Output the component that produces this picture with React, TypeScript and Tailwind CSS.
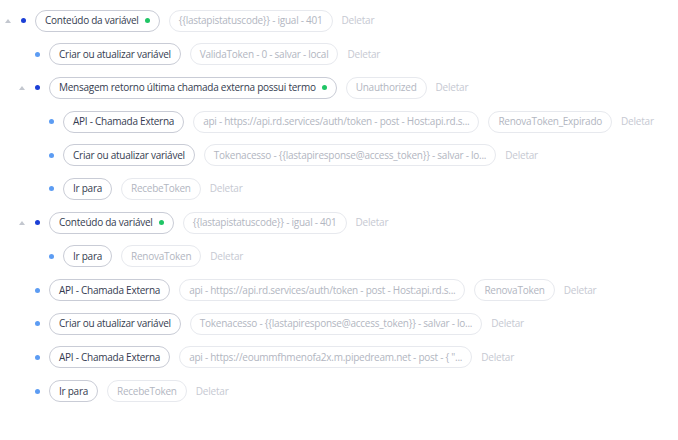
type Row = {
  level: 0 | 1 | 2;
  caret?: boolean;
  dark?: boolean;
  title: string;
  green?: boolean;
  values: string[];
};

const rows: Row[] = [
  { level: 0, caret: true, dark: true, title: "Conteúdo da variável", green: true, values: ["{{lastapistatuscode}} - igual - 401"] },
  { level: 1, title: "Criar ou atualizar variável", values: ["ValidaToken - 0 - salvar - local"] },
  { level: 1, caret: true, dark: true, title: "Mensagem retorno última chamada externa possui termo", green: true, values: ["Unauthorized"] },
  { level: 2, title: "API - Chamada Externa", values: ["api - https://api.rd.services/auth/token - post - Host:api.rd.s...", "RenovaToken_Expirado"] },
  { level: 2, title: "Criar ou atualizar variável", values: ["Tokenacesso - {{lastapiresponse@access_token}} - salvar - lo..."] },
  { level: 2, title: "Ir para", values: ["RecebeToken"] },
  { level: 1, caret: true, dark: true, title: "Conteúdo da variável", green: true, values: ["{{lastapistatuscode}} - igual - 401"] },
  { level: 2, title: "Ir para", values: ["RenovaToken"] },
  { level: 1, title: "API - Chamada Externa", values: ["api - https://api.rd.services/auth/token - post - Host:api.rd.s...", "RenovaToken"] },
  { level: 1, title: "Criar ou atualizar variável", values: ["Tokenacesso - {{lastapiresponse@access_token}} - salvar - lo..."] },
  { level: 1, title: "API - Chamada Externa", values: ["api - https://eoummfhmenofa2x.m.pipedream.net - post - { \"..."] },
  { level: 1, title: "Ir para", values: ["RecebeToken"] },
];

const indent = ["pl-[1px]", "pl-[15px]", "pl-[29px]"];

function TreeRow({ row }: { row: Row }) {
  return (
    <div className={`flex h-[22px] items-center whitespace-nowrap ${indent[row.level]}`}>
      {/* caret */}
      <div className="flex w-[14px] shrink-0 items-center justify-center">
        {row.caret && (
          <svg width="6" height="4" viewBox="0 0 6 4">
            <path d="M3 0 L6 4 L0 4 Z" fill="#c3c7cf" />
          </svg>
        )}
      </div>
      {/* status dot */}
      <div className="flex w-[16px] shrink-0 items-center justify-center">
        <span className={`h-[5px] w-[5px] rounded-full ${row.dark ? "bg-[#1b3fd6]" : "bg-[#5c9cf3]"}`} />
      </div>
      <div className="ml-[4px] flex h-[22px] shrink-0 items-center gap-[6px] rounded-full border border-[#c9ccd6] px-[9px] text-[10px] font-medium tracking-[-0.25px] text-[#353c50]">
        <span>{row.title}</span>
        {row.green && <span className="h-[5px] w-[5px] rounded-full bg-[#1fc565]" />}
      </div>
      {row.values.map((v, i) => (
        <div
          key={i}
          className="ml-[9px] flex h-[22px] shrink-0 items-center rounded-full border border-[#e7e9ee] px-[9px] text-[10px] tracking-[-0.25px] text-[#b2b6c1]"
        >
          {v}
        </div>
      ))}
      <span className="ml-[9px] text-[10px] tracking-[-0.2px] text-[#c6c9d2]">Deletar</span>
    </div>
  );
}

export default function App() {
  return (
    <div className="h-[440px] w-[678px] bg-white pt-[9.5px] font-['Open_Sans',sans-serif]">
      <div className="flex flex-col gap-[11.7px]">
        {rows.map((r, i) => (
          <TreeRow key={i} row={r} />
        ))}
      </div>
    </div>
  );
}
